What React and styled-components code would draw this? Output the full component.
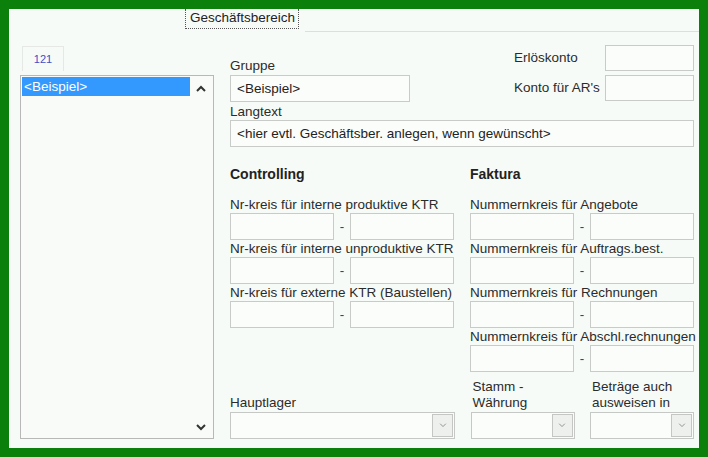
import styled, { createGlobalStyle } from "styled-components";

const GlobalStyle = createGlobalStyle`
  html, body {
    margin: 0;
    padding: 0;
  }
  body {
    font-family: "Liberation Sans", Arial, sans-serif;
    font-size: 13.5px;
    color: #2b2b2b;
  }
`;

const Frame = styled.div`
  width: 708px;
  height: 457px;
  box-sizing: border-box;
  border: 9px solid #0b800b;
  background: #f7fbf7;
  display: flex;
  flex-direction: column;
  overflow: hidden;
`;

const TabBar = styled.div`
  display: flex;
  height: 23px;
  padding-left: 176px;
`;

const Tab = styled.div`
  height: 19px;
  padding: 0 3px 0 4px;
  border: 1px dotted #555;
  border-top: none;
  line-height: 17px;
  font-size: 13.5px;
  color: #222;
`;

const TabRest = styled.div`
  flex: 1;
  margin-left: 6px;
  border-bottom: 1px solid #dedede;
`;

const Body = styled.div`
  display: flex;
  gap: 16px;
  padding-left: 11px;
  flex: 1;
`;

const LeftCol = styled.div`
  width: 194px;
  display: flex;
  flex-direction: column;
  padding-top: 14px;
`;

const CountTab = styled.div`
  width: 42px;
  height: 25px;
  margin-left: 2px;
  margin-bottom: 4px;
  box-sizing: border-box;
  border: 1px solid #e6e8e6;
  border-bottom: none;
  text-align: center;
  line-height: 25px;
  font-size: 11px;
  color: #3d4fc8;
`;

const ListBox = styled.div`
  height: 364px;
  box-sizing: border-box;
  border: 1px solid #b8b8b8;
  padding: 1px;
  display: flex;
  background: #f8fbf8;
`;

const Items = styled.div`
  flex: 1;
`;

const Item = styled.div`
  height: 19px;
  line-height: 19px;
  padding-left: 2px;
  background: ${(p) => (p.selected ? "#3399ff" : "transparent")};
  color: ${(p) => (p.selected ? "#fff" : "#222")};
`;

const ScrollCol = styled.div`
  width: 22px;
  display: flex;
  flex-direction: column;
  justify-content: space-between;
  align-items: center;
  padding: 8px 0 6px;
`;

const Form = styled.div`
  width: 464px;
  display: flex;
  flex-direction: column;
  padding-top: 13px;
`;

const TopSection = styled.div`
  display: flex;
  justify-content: space-between;
  height: 56px;
`;

const Stack = styled.div`
  width: ${(p) => p.width || "auto"};
  padding-top: ${(p) => p.top || 0}px;
`;

const Label = styled.div`
  line-height: 16px;
  height: ${(p) => p.h || 16}px;
  white-space: nowrap;
  padding-left: ${(p) => p.indent || 0}px;
`;

const AccountGrid = styled.div`
  display: grid;
  grid-template-columns: 91px 89px;
  grid-auto-rows: 26px;
  row-gap: 4px;
  align-items: center;
`;

const Field = styled.input`
  display: block;
  width: 100%;
  height: ${(p) => p.h || 27}px;
  box-sizing: border-box;
  border: 1px solid #c9cbc9;
  background: #fbfdfb;
  padding: 0 6px;
  font-family: "Liberation Sans", Arial, sans-serif;
  font-size: 13.5px;
  color: #222;
  outline: none;
`;

const Columns = styled.div`
  display: grid;
  grid-template-columns: 224px 224px;
  column-gap: 16px;
  margin-top: 19px;
`;

const Heading = styled.div`
  font-weight: bold;
  font-size: 14px;
  line-height: 16px;
  margin-bottom: 15px;
  color: #222;
`;

const RangeRow = styled.div`
  margin-bottom: 1px;
`;

const Pair = styled.div`
  display: grid;
  grid-template-columns: 104px 16px 104px;
  align-items: center;
`;

const Dash = styled.span`
  text-align: center;
  color: #444;
`;

const BottomRow = styled.div`
  display: flex;
  justify-content: space-between;
  align-items: flex-end;
  margin-top: 6px;
`;

const Select = styled.div`
  width: ${(p) => p.width}px;
  height: 27px;
  margin-top: 1px;
  box-sizing: border-box;
  border: 1px solid #c6c8c6;
  background: #fbfdfb;
  padding: 1px;
  display: flex;
  justify-content: flex-end;
`;

const DropButton = styled.div`
  width: 21px;
  box-sizing: border-box;
  border: 1px solid #c4c6c4;
  background: #eef0ee;
  display: flex;
  align-items: center;
  justify-content: center;
`;

const Chevron = ({ up, color = "#333", w = 10, h = 7, sw = 2 }) => (
  <svg width={w} height={h} viewBox="0 0 10 7">
    <polyline
      points={up ? "1,6 5,2 9,6" : "1,1 5,5 9,1"}
      fill="none"
      stroke={color}
      strokeWidth={sw}
    />
  </svg>
);

const Range = ({ label }) => (
  <RangeRow>
    <Label>{label}</Label>
    <Pair>
      <Field readOnly />
      <Dash>-</Dash>
      <Field readOnly />
    </Pair>
  </RangeRow>
);

const Dropdown = ({ label, width, lines = 2 }) => (
  <Stack>
    <Label h={lines * 16} indent={width < 200 ? 2 : 0}>
      {label}
    </Label>
    <Select width={width}>
      <DropButton>
        <Chevron color="#8a8a8a" w={8} h={5} sw={1.3} />
      </DropButton>
    </Select>
  </Stack>
);

const controlling = [
  "Nr-kreis für interne produktive KTR",
  "Nr-kreis für interne unproduktive KTR",
  "Nr-kreis für externe KTR (Baustellen)",
];

const faktura = [
  "Nummernkreis für Angebote",
  "Nummernkreis für Auftrags.best.",
  "Nummernkreis für Rechnungen",
  "Nummernkreis für Abschl.rechnungen",
];

export default function App() {
  return (
    <>
      <GlobalStyle />
      <Frame>
        <TabBar>
          <Tab>Geschäftsbereich</Tab>
          <TabRest />
        </TabBar>
        <Body>
          <LeftCol>
            <CountTab>121</CountTab>
            <ListBox>
              <Items>
                <Item selected>&lt;Beispiel&gt;</Item>
              </Items>
              <ScrollCol>
                <Chevron up />
                <Chevron />
              </ScrollCol>
            </ListBox>
          </LeftCol>
          <Form>
            <TopSection>
              <Stack width="180px" top={13}>
                <Label h={17}>Gruppe</Label>
                <Field readOnly value="<Beispiel>" />
              </Stack>
              <AccountGrid>
                <Label>Erlöskonto</Label>
                <Field readOnly h={26} />
                <Label>Konto für AR's</Label>
                <Field readOnly h={26} />
              </AccountGrid>
            </TopSection>
            <Stack top={3}>
              <Label>Langtext</Label>
              <Field
                readOnly
                value="<hier evtl. Geschäftsber. anlegen, wenn gewünscht>"
              />
            </Stack>
            <Columns>
              <div>
                <Heading>Controlling</Heading>
                {controlling.map((l) => (
                  <Range key={l} label={l} />
                ))}
              </div>
              <div>
                <Heading>Faktura</Heading>
                {faktura.map((l) => (
                  <Range key={l} label={l} />
                ))}
              </div>
            </Columns>
            <BottomRow>
              <Dropdown label="Hauptlager" width={225} lines={1} />
              <Dropdown
                label={
                  <>
                    Stamm -<br />
                    Währung
                  </>
                }
                width={104}
              />
              <Dropdown
                label={
                  <>
                    Beträge auch
                    <br />
                    ausweisen in
                  </>
                }
                width={104}
              />
            </BottomRow>
          </Form>
        </Body>
      </Frame>
    </>
  );
}
